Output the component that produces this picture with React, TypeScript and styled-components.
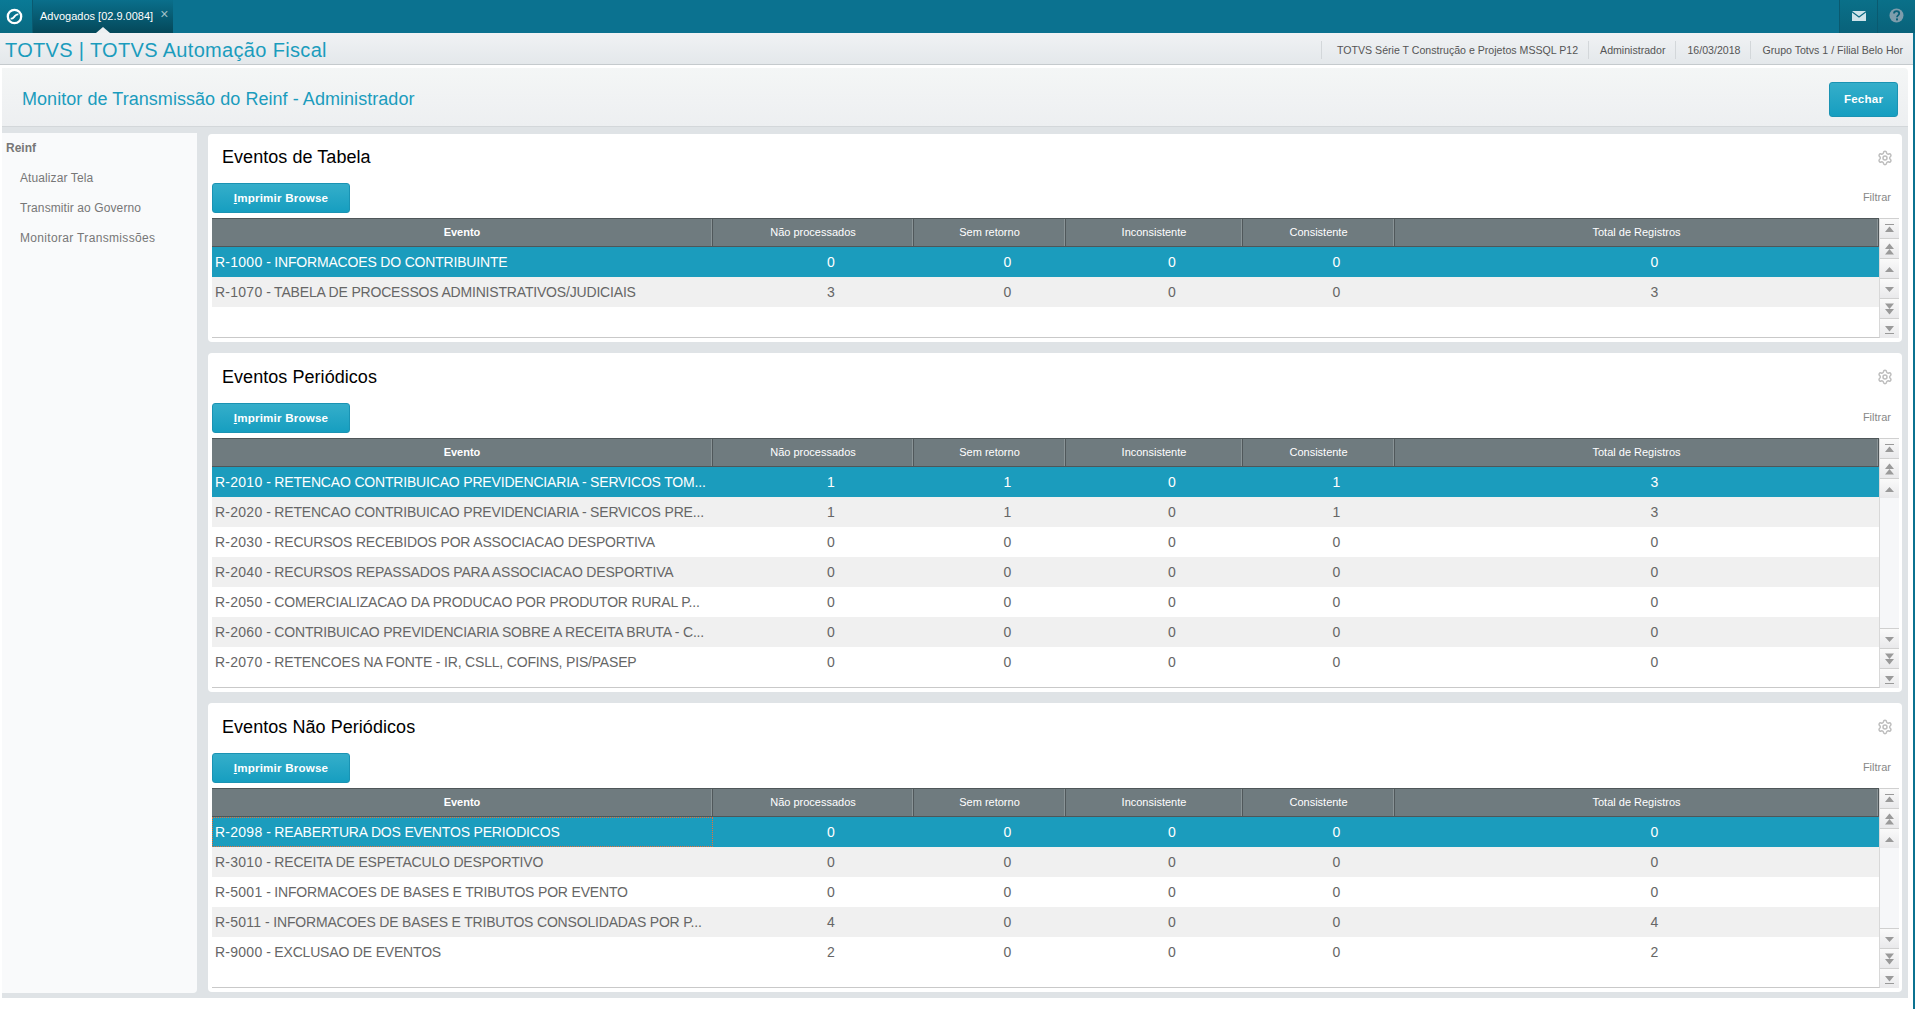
import React from "react";
import styled, { createGlobalStyle } from "styled-components";
import { Settings } from "lucide-react";

const Global = createGlobalStyle`
  html, body { margin: 0; padding: 0; background: #fff; }
  body { font-family: "Liberation Sans", Arial, sans-serif; overflow: hidden; }
  * { box-sizing: border-box; }
`;

const Page = styled.div`
  width: 1915px; height: 1009px; display: flex; flex-direction: column; overflow: hidden; background: #fff;
`;
const TopBar = styled.div`
  height: 33px; flex: none; display: flex; align-items: stretch; background: #0b7290;
`;
const LogoBox = styled.div`
  width: 33px; display: flex; align-items: center; padding-left: 6px;
  background: linear-gradient(#0a7a96, #086a82); border-right: 1px solid #0a5a70;
`;
const Tab = styled.div`
  position: relative; width: 140px; display: flex; align-items: center; padding: 0 0 2px 7px;
  background: linear-gradient(#0a6f8b, #04485a); color: #fff; font-size: 11px;
  &::after {
    content: ""; position: absolute; left: 63px; bottom: 0; border: 7px solid transparent;
    border-top: 0; border-bottom: 6px solid #edf0f2;
  }
`;
const TabClose = styled.span`
  margin-left: 7px; color: #a0c0c8; font-size: 14px; margin-top: -4px; line-height: 14px;
`;
const TopSpacer = styled.div` flex: 1; `;
const IconBox = styled.div`
  width: 38px; display: flex; align-items: center; justify-content: center; padding-bottom: 2px;
  background: linear-gradient(#0a7089, #09627a); border-left: 1px solid #0a5a70;
`;
const Workspace = styled.div`
  flex: 1; min-height: 0; display: flex; flex-direction: column; border-right: 2px solid #0b7290;
`;
const TitleBar = styled.div`
  height: 32px; flex: none; display: flex; align-items: center; justify-content: space-between;
  background: linear-gradient(#f0f2f4, #e4e8eb); border-bottom: 1px solid #c5cacd; padding: 3px 0 0 5px;
`;
const AppTitle = styled.div`
  color: #1b9cbd; font-size: 20px; letter-spacing: 0.33px;
`;
const InfoList = styled.div`
  display: flex; align-items: center; height: 18px; margin-top: -1px;
`;
const InfoItem = styled.div`
  height: 18px; line-height: 18px; padding: 0 10px 0 11px; border-left: 1px solid #d3d7da; color: #555; font-size: 10.6px; white-space: nowrap;
  &:first-child { padding-left: 15px; }
`;
const HeaderBar = styled.div`
  height: 59px; flex: none; margin: 3px 5px 0 2px; padding: 0 10px 0 20px; display: flex; align-items: center; justify-content: space-between;
  background: linear-gradient(#f4f6f6, #edeff1); border-bottom: 1px solid #d3d7da; border-top-right-radius: 4px;
`;
const PageTitle = styled.h1`
  margin: 5px 0 0; font-size: 18px; font-weight: 400; color: #1b9cbd; letter-spacing: 0.05px;
`;
const Button = styled.button`
  border: 1px solid #1a93b3; border-radius: 3px; color: #fff; font: bold 11.6px "Liberation Sans", Arial, sans-serif; letter-spacing: 0.2px;
  background: linear-gradient(#35aeca, #169ec0); padding: 0 0 2px;
  display: block;
`;
const CloseButton = styled(Button)` width: 69px; height: 35px; margin-top: 4px; `;
const Body = styled.div`
  flex: none; height: 871px; margin: 0 5px 0 2px; background: #dfe3e6; display: flex; gap: 11px; padding: 6px 6px 5px 0;
`;
const Sidebar = styled.nav`
  width: 195px; flex: none; background: #f9fafb; border-radius: 0 0 4px 0; padding: 8px 0 0 4px; font-size: 12px; color: #777;
`;
const SideHead = styled.div`
  font-weight: bold; height: 14px; line-height: 14px; margin-bottom: 16px;
`;
const SideItem = styled.div<{ $track?: number }>`
  height: 30px; line-height: 14px; padding-left: 14px; letter-spacing: ${(p) => p.$track ?? 0.1}px;
`;
const Main = styled.main`
  flex: 1; min-width: 0; display: flex; flex-direction: column; gap: 11px; padding-top: 1px;
`;
const Panel = styled.section<{ $h: number }>`
  height: ${(p) => p.$h}px; flex: none; background: #fff; border-radius: 4px; padding: 0 4px 4px; display: flex; flex-direction: column;
`;
const PanelHead = styled.div<{ $h: number; $pad: number }>`
  height: ${(p) => p.$h}px; flex: none; display: flex; align-items: center; justify-content: space-between; padding: 0 5px ${(p) => p.$pad}px 10px;
`;
const PanelTitle = styled.h2`
  margin: 0; font-size: 18px; font-weight: 400; color: #000; letter-spacing: 0.05px;
`;
const Gear = styled(Settings)`
  align-self: flex-start; margin-top: 16px;
`;
const Toolbar = styled.div`
  height: 35px; flex: none; display: flex; justify-content: space-between; align-items: flex-start;
`;
const PrintButton = styled(Button)` width: 138px; height: 30px; `;
const Filter = styled.span`
  font-size: 11px; color: #888; margin: 8px 7px 0 0;
`;
const Grid = styled.div`
  flex: 1; display: flex; min-height: 0;
`;
const TableBox = styled.div`
  width: 1668px; flex: none; border-bottom: 1px solid #c9c9c9; border-right: 1px solid #d8d8d8;
`;
const Table = styled.table`
  width: 1667px; table-layout: fixed; border-collapse: separate; border-spacing: 0;
`;
const Th = styled.th<{ $main?: boolean }>`
  height: 29px; padding: 0 0 2px; background: #6f7b7f; color: #fff; font-size: 11px; font-weight: ${(p) => (p.$main ? "bold" : "400")};
  border-top: 1px solid #4f5659; border-bottom: 1px solid #4f5659; border-right: 1px solid #50585b; box-shadow: inset -1px 0 0 #8a9497;
`;
const Tr = styled.tr<{ $kind: "sel" | "odd" | "even" }>`
  background: ${(p) => (p.$kind === "sel" ? "#1b9cbd" : p.$kind === "odd" ? "#f0f0f0" : "#fff")};
  color: ${(p) => (p.$kind === "sel" ? "#fff" : "#666")};
`;
const NameTd = styled.td<{ $focus?: boolean }>`
  height: 30px; padding: 0 0 0 3px; font-size: 14px; white-space: nowrap; overflow: hidden; letter-spacing: -0.18px;
  ${(p) => (p.$focus ? "outline: 1px dotted #e8703a; outline-offset: -1px;" : "")}
`;
const Code = styled.span` letter-spacing: 0.25px; `;
const NumTd = styled.td`
  padding: 0 0 0 35px; text-align: center; font-size: 14px;
`;
const Scroll = styled.div`
  width: 19px; flex: none; display: flex; flex-direction: column; justify-content: space-between; background: #f6f7f9;
`;
const ScrollGroup = styled.div` display: flex; flex-direction: column; `;
const ScrollBtn = styled.div`
  height: 20px; display: flex; align-items: center; justify-content: center;
  background: linear-gradient(#fafafa, #e9e9eb); border-top: 1px solid #d0d0d0;
`;

type Dir = "top" | "dup" | "up" | "down" | "ddown" | "bottom";
const GLYPHS: Record<Dir, React.ReactNode> = {
  top: <><rect x="2" y="1" width="9" height="1" /><path d="M2 9 6.5 3.5 11 9Z" /></>,
  dup: <><path d="M2 6 6.5 .5 11 6Z" /><path d="M2 11.5 6.5 6 11 11.5Z" /></>,
  up: <path d="M2 9 6.5 4 11 9Z" />,
  down: <path d="M2 4 6.5 9 11 4Z" />,
  ddown: <><path d="M2 .5 6.5 6 11 .5Z" /><path d="M2 6 6.5 11.5 11 6Z" /></>,
  bottom: <><path d="M2 3 6.5 8.5 11 3Z" /><rect x="2" y="10" width="9" height="1" /></>,
};
const Arrow = ({ d }: { d: Dir }) => (
  <ScrollBtn>
    <svg width="13" height="12" viewBox="0 0 13 12" fill="#9a9a9a">{GLYPHS[d]}</svg>
  </ScrollBtn>
);

const widths = [501, 201, 152, 177, 152, 484];
const heads = ["Evento", "Não processados", "Sem retorno", "Inconsistente", "Consistente", "Total de Registros"];
type Row = [string, number, number, number, number, number];
type Data = { title: string; h: number; head: number; pad: number; focus?: boolean; rows: Row[] };
const panels: Data[] = [
  { title: "Eventos de Tabela", h: 208, head: 49, pad: 3, rows: [
    ["R-1000 - INFORMACOES DO CONTRIBUINTE", 0, 0, 0, 0, 0],
    ["R-1070 - TABELA DE PROCESSOS ADMINISTRATIVOS/JUDICIAIS", 3, 0, 0, 0, 3],
  ] },
  { title: "Eventos Periódicos", h: 339, head: 50, pad: 1, rows: [
    ["R-2010 - RETENCAO CONTRIBUICAO PREVIDENCIARIA - SERVICOS TOM...", 1, 1, 0, 1, 3],
    ["R-2020 - RETENCAO CONTRIBUICAO PREVIDENCIARIA - SERVICOS PRE...", 1, 1, 0, 1, 3],
    ["R-2030 - RECURSOS RECEBIDOS POR ASSOCIACAO DESPORTIVA", 0, 0, 0, 0, 0],
    ["R-2040 - RECURSOS REPASSADOS PARA ASSOCIACAO DESPORTIVA", 0, 0, 0, 0, 0],
    ["R-2050 - COMERCIALIZACAO DA PRODUCAO POR PRODUTOR RURAL P...", 0, 0, 0, 0, 0],
    ["R-2060 - CONTRIBUICAO PREVIDENCIARIA SOBRE A RECEITA BRUTA - C...", 0, 0, 0, 0, 0],
    ["R-2070 - RETENCOES NA FONTE - IR, CSLL, COFINS, PIS/PASEP", 0, 0, 0, 0, 0],
  ] },
  { title: "Eventos Não Periódicos", h: 289, head: 50, pad: 1, focus: true, rows: [
    ["R-2098 - REABERTURA DOS EVENTOS PERIODICOS", 0, 0, 0, 0, 0],
    ["R-3010 - RECEITA DE ESPETACULO DESPORTIVO", 0, 0, 0, 0, 0],
    ["R-5001 - INFORMACOES DE BASES E TRIBUTOS POR EVENTO", 0, 0, 0, 0, 0],
    ["R-5011 - INFORMACOES DE BASES E TRIBUTOS CONSOLIDADAS POR P...", 4, 0, 0, 0, 4],
    ["R-9000 - EXCLUSAO DE EVENTOS", 2, 0, 0, 0, 2],
  ] },
];

const Logo = () => (
  <svg width="17" height="17" viewBox="0 0 17 17" fill="none" stroke="#fff">
    <circle cx="8.5" cy="8.5" r="6.7" strokeWidth="2.3" />
    <path d="M4.6 10.6C7 11 7.6 9.4 8.5 8.5S10.2 6 12.4 6.4" strokeWidth="1.9" />
  </svg>
);

const EventPanel = ({ data }: { data: Data }) => (
  <Panel $h={data.h}>
    <PanelHead $h={data.head} $pad={data.pad}>
      <PanelTitle>{data.title}</PanelTitle>
      <Gear size={16} color="#bdbdbd" strokeWidth={2.2} />
    </PanelHead>
    <Toolbar>
      <PrintButton><u>I</u>mprimir Browse</PrintButton>
      <Filter>Filtrar</Filter>
    </Toolbar>
    <Grid>
      <TableBox>
        <Table>
          <colgroup>{widths.map((w, i) => <col key={i} width={w} />)}</colgroup>
          <thead>
            <tr>{heads.map((h, i) => <Th key={h} $main={i === 0}>{h}</Th>)}</tr>
          </thead>
          <tbody>
            {data.rows.map((r, i) => (
              <Tr key={r[0]} $kind={i === 0 ? "sel" : i % 2 ? "odd" : "even"}>
                <NameTd $focus={data.focus && i === 0}><Code>{r[0].slice(0, 6)}</Code>{r[0].slice(6)}</NameTd>
                {r.slice(1).map((v, j) => <NumTd key={j}>{v}</NumTd>)}
              </Tr>
            ))}
          </tbody>
        </Table>
      </TableBox>
      <Scroll>
        <ScrollGroup><Arrow d="top" /><Arrow d="dup" /><Arrow d="up" /></ScrollGroup>
        <ScrollGroup><Arrow d="down" /><Arrow d="ddown" /><Arrow d="bottom" /></ScrollGroup>
      </Scroll>
    </Grid>
  </Panel>
);

export default function App() {
  return (
    <Page>
      <Global />
      <TopBar>
        <LogoBox><Logo /></LogoBox>
        <Tab>Advogados [02.9.0084]<TabClose>×</TabClose></Tab>
        <TopSpacer />
        <IconBox>
          <svg width="14" height="10" viewBox="0 0 14 10" fill="#cfe3ea"><path d="M0 0h14L7 5.2Z" /><path d="M0 1.6V10h14V1.6L7 6.8Z" /></svg>
        </IconBox>
        <IconBox>
          <svg width="15" height="15" viewBox="0 0 15 15"><circle cx="7.5" cy="7.5" r="7" fill="#7d9dac" /><path d="M5 5.6c0-3.2 5.2-3.2 5.2 0 0 1.8-2.2 1.8-2.2 3.6" fill="none" stroke="#0b6078" strokeWidth="1.8" /><rect x="7" y="10.4" width="2" height="2" fill="#0b6078" /></svg>
        </IconBox>
      </TopBar>
      <Workspace>
        <TitleBar>
          <AppTitle>TOTVS | TOTVS Automação Fiscal</AppTitle>
          <InfoList>
            <InfoItem>TOTVS Série T Construção e Projetos MSSQL P12</InfoItem>
            <InfoItem>Administrador</InfoItem>
            <InfoItem>16/03/2018</InfoItem>
            <InfoItem>Grupo Totvs 1 / Filial Belo Hor</InfoItem>
          </InfoList>
        </TitleBar>
        <HeaderBar>
          <PageTitle>Monitor de Transmissão do Reinf - Administrador</PageTitle>
          <CloseButton>Fechar</CloseButton>
        </HeaderBar>
        <Body>
          <Sidebar>
            <SideHead>Reinf</SideHead>
            <SideItem>Atualizar Tela</SideItem>
            <SideItem>Transmitir ao Governo</SideItem>
            <SideItem $track={0.33}>Monitorar Transmissões</SideItem>
          </Sidebar>
          <Main>
            {panels.map((p) => <EventPanel key={p.title} data={p} />)}
          </Main>
        </Body>
      </Workspace>
    </Page>
  );
}
